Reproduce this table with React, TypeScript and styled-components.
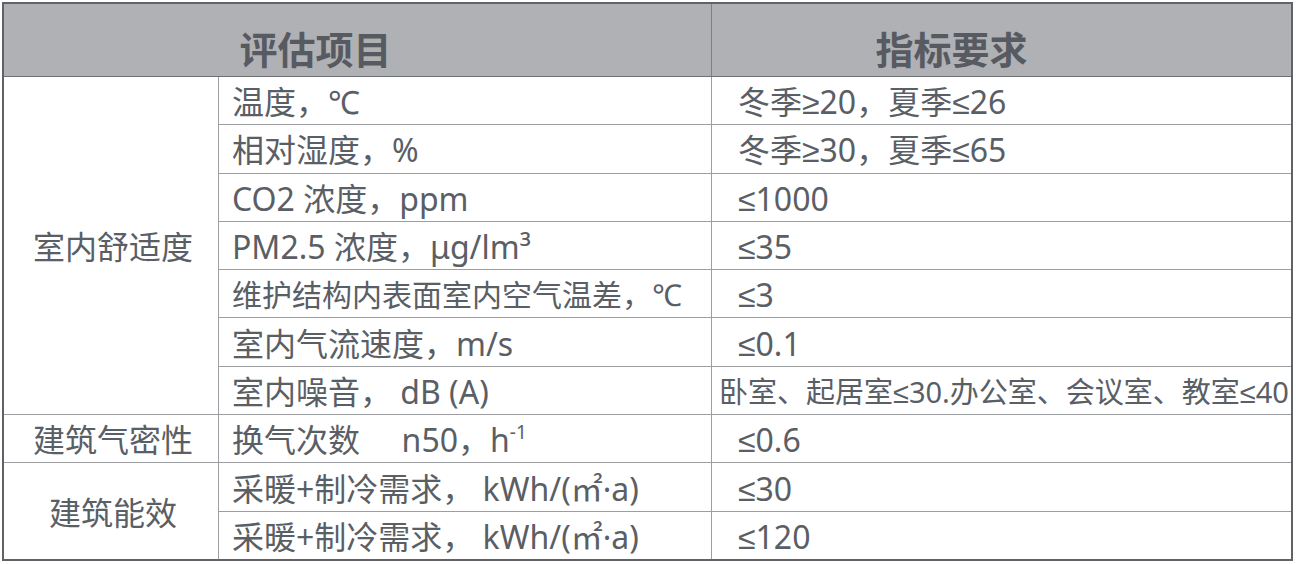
import * as React from "react";
import styled, { createGlobalStyle } from "styled-components";

const GlobalStyle = createGlobalStyle`
  html, body {
    margin: 0;
    padding: 0;
    background: #ffffff;
  }
  body {
    font-family: "Noto Sans", "Liberation Sans", "Noto Sans CJK SC", sans-serif;
  }
`;

const Sup = styled.sup`
  font-size: 19px;
  vertical-align: 13px;
  line-height: 0;
`;

interface Item {
  label: React.ReactNode;
  value: React.ReactNode;
  labelSize?: number;
  valueSize?: number;
}

interface Group {
  name: string;
  items: Item[];
}

const groups: Group[] = [
  {
    name: "室内舒适度",
    items: [
      { label: "温度，℃", value: "冬季≥20，夏季≤26" },
      { label: "相对湿度，%", value: "冬季≥30，夏季≤65" },
      { label: "CO2 浓度，ppm", value: "≤1000" },
      { label: "PM2.5 浓度，μg/lm³", value: "≤35" },
      { label: "维护结构内表面室内空气温差，℃", value: "≤3", labelSize: 30 },
      { label: "室内气流速度，m/s", value: "≤0.1" },
      {
        label: "室内噪音， dB (A)",
        value: "卧室、起居室≤30.办公室、会议室、教室≤40",
        valueSize: 29,
      },
    ],
  },
  {
    name: "建筑气密性",
    items: [
      {
        label: (
          <>
            换气次数&nbsp;&nbsp;&nbsp;&nbsp; n50，h<Sup>-1</Sup>
          </>
        ),
        value: "≤0.6",
      },
    ],
  },
  {
    name: "建筑能效",
    items: [
      { label: "采暖+制冷需求， kWh/(㎡·a)", value: "≤30" },
      { label: "采暖+制冷需求， kWh/(㎡·a)", value: "≤120" },
    ],
  },
];

export default function App() {
  let row = 1;
  return (
    <>
      <GlobalStyle />
      <Page>
        <Table>
          <Header>
            <HeadCell $shift={84}>评估项目</HeadCell>
            <HeadCell $shift={100}>指标要求</HeadCell>
          </Header>
          <Body>
            {groups.map((group) => {
              const start = row;
              row += group.items.length;
              return (
                <React.Fragment key={group.name}>
                  <GroupCell $start={start} $span={group.items.length}>
                    {group.name}
                  </GroupCell>
                  {group.items.map((item, i) => (
                    <React.Fragment key={i}>
                      <LabelCell $row={start + i}>
                        <Text $size={item.labelSize}>{item.label}</Text>
                      </LabelCell>
                      <ValueCell $row={start + i} $tight={!!item.valueSize}>
                        <Text $size={item.valueSize}>{item.value}</Text>
                      </ValueCell>
                    </React.Fragment>
                  ))}
                </React.Fragment>
              );
            })}
          </Body>
        </Table>
      </Page>
    </>
  );
}

const Page = styled.div`
  padding: 2px 0 0 2px;
`;

const Table = styled.div`
  width: 1287px;
  height: 555px;
  border: 2px solid #5f6368;
  display: flex;
  flex-direction: column;
  color: #5a5e65;
`;

const Header = styled.div`
  height: 72px;
  display: grid;
  grid-template-columns: 707px 1fr;
  column-gap: 1px;
  background: #7d8085;
  border-bottom: 1px solid #6c6f74;
`;

const HeadCell = styled.div<{ $shift: number }>`
  background: #b0b1b4;
  display: flex;
  align-items: center;
  justify-content: center;
  padding: 14px ${(p) => p.$shift}px 0 0;
  font-family: "Noto Sans CJK SC", sans-serif;
  font-size: 38px;
  font-weight: 700;
  color: #575a60;
`;

const Body = styled.div`
  flex: 1;
  display: grid;
  grid-template-columns: 214px 492px 1fr;
  grid-template-rows: repeat(10, 1fr);
  gap: 1px;
  background: #9c9ea2;
`;

const Cell = styled.div`
  background: #ffffff;
  display: flex;
  align-items: center;
  font-size: 32px;
  line-height: 1;
  white-space: nowrap;
  overflow: hidden;
  padding-top: 3px;
`;

const GroupCell = styled(Cell)<{ $start: number; $span: number }>`
  grid-column: 1;
  grid-row: ${(p) => p.$start} / span ${(p) => p.$span};
  justify-content: center;
  padding-left: 4px;
`;

const LabelCell = styled(Cell)<{ $row: number }>`
  grid-column: 2;
  grid-row: ${(p) => p.$row};
  padding-left: 13px;
`;

const ValueCell = styled(Cell)<{ $row: number; $tight?: boolean }>`
  grid-column: 3;
  grid-row: ${(p) => p.$row};
  padding-left: ${(p) => (p.$tight ? 7 : 26)}px;
`;

const Text = styled.span<{ $size?: number }>`
  font-size: ${(p) => p.$size ?? 32}px;
`;
